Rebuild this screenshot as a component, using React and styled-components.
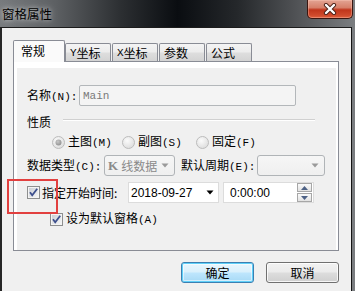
import React from "react";
import styled, { createGlobalStyle } from "styled-components";

const GlobalStyle = createGlobalStyle`
  html, body { margin: 0; padding: 0; }
  body {
    width: 355px; height: 291px; overflow: hidden;
    background: #6a6d70;
    font-family: "Noto Sans CJK SC", "Noto Sans", sans-serif;
  }
`;

const Window = styled.div`
  position: relative;
  width: 355px;
  height: 291px;
  display: flex;
  flex-direction: column;
  background: linear-gradient(90deg, #787b7e 0%, #5c5f62 16%, #2c2f32 34%, #0a0d11 50%, #25282b 67%, #57595c 86%, #7b7e81 100%);
`;

const TitleBar = styled.div`
  height: 27px;
  flex: none;
  display: flex;
  align-items: flex-start;
`;

const Title = styled.span`
  margin: 6px 0 0 2px;
  font-size: 12.5px;
  line-height: 15px;
  color: #000;
  text-shadow: 0 0 4px rgba(255,255,255,0.55), 0 0 9px rgba(255,255,255,0.45);
`;

const CloseButton = styled.div`
  box-sizing: border-box;
  margin-left: auto;
  margin-right: 2px;
  width: 46px;
  height: 19px;
  border: 1px solid #3a1610;
  border-top: none;
  border-radius: 0 0 5px 5px;
  background: linear-gradient(#e3a493 0%, #d6806a 42%, #c0351b 55%, #cf4a2c 85%, #e0603e 100%);
  box-shadow: inset 0 0 0 1px rgba(255, 210, 195, 0.35);
  display: flex;
  align-items: center;
  justify-content: center;
`;

const Client = styled.div`
  flex: 1;
  display: flex;
  flex-direction: column;
  background: #f0f0f0;
  margin-right: 3px;
  border-left: 2px solid #262626;
  border-right: 1px solid #141414;
  border-top: 1px solid #1c1c1c;
  padding: 12px 0 0 11px;
`;

const TabStrip = styled.div`
  display: flex;
  align-items: flex-end;
  height: 21px;
  position: relative;
  z-index: 1;
`;

const Tab = styled.div`
  box-sizing: border-box;
  width: ${(p) => (p.$active ? 52 : 46)}px;
  height: ${(p) => (p.$active ? 22 : 18)}px;
  margin-bottom: ${(p) => (p.$active ? -1 : 0)}px;
  margin-right: ${(p) => (p.$active ? 0 : 1)}px;
  border: 1px solid #898c95;
  border-bottom: none;
  border-radius: 2px 2px 0 0;
  background: ${(p) =>
    p.$active
      ? "#fafafa"
      : "linear-gradient(#f4f4f4 0%, #ececec 48%, #dedede 52%, #d3d3d3 100%)"};
  display: flex;
  align-items: center;
  padding-left: ${(p) => (p.$active ? 7 : 4)}px;
  padding-bottom: ${(p) => (p.$active ? 1 : 0)}px;
  font-size: 12px;
  line-height: 14px;
  color: #000;
  white-space: nowrap;
`;

const Ascii = styled.span`
  font-family: "Liberation Mono", monospace;
  font-size: 11px;
  color: ${(p) => p.$color || "inherit"};
`;

const Panel = styled.div`
  box-sizing: border-box;
  width: 326px;
  height: 190px;
  border: 1px solid #898c95;
  background: #fff;
  padding: 6px 2px 0 3px;
  display: flex;
`;

const Form = styled.div`
  flex: 1;
  background: #f0f0f0;
  display: flex;
  flex-direction: column;
  padding: 17px 0 0 10px;
`;

const Row = styled.div`
  display: flex;
  align-items: center;
  flex: none;
  height: ${(p) => p.$h || 21}px;
  margin-top: ${(p) => p.$mt || 0}px;
  padding-left: ${(p) => p.$indent || 0}px;
`;

const Label = styled.span`
  flex: none;
  width: ${(p) => (p.$w ? `${p.$w}px` : "auto")};
  margin-left: ${(p) => p.$ml || 0}px;
  font-size: 12px;
  line-height: 14px;
  color: ${(p) => (p.$disabled ? "#6d6d6d" : "#000")};
  white-space: nowrap;
`;

const TextInput = styled.div`
  box-sizing: border-box;
  width: 217px;
  height: 21px;
  border: 1px solid #b3b7ba;
  border-radius: 2px;
  background: #f4f4f4;
  padding-left: 3px;
  display: flex;
  align-items: center;
  font-family: "Liberation Mono", monospace;
  font-size: 11px;
  color: #7a7a7a;
`;

const GroupRule = styled.div`
  flex: 1;
  align-self: flex-start;
  margin: 4px 21px 0 12px;
  border-top: 1px solid #d0d0d0;
  border-bottom: 1px solid #ffffff;
`;

const RadioItem = styled.div`
  width: ${(p) => p.$w}px;
  flex: none;
  display: flex;
  align-items: center;
  gap: 3px;
`;

const Combo = styled.div`
  box-sizing: border-box;
  width: ${(p) => p.$w}px;
  height: 21px;
  flex: none;
  border: 1px solid #b0b4b7;
  border-radius: 3px;
  background: linear-gradient(#f6f6f6, #efefef);
  display: flex;
  align-items: center;
  padding: 0 5px 0 3px;
  font-size: 12px;
  line-height: 14px;
  color: #8a8a8a;
`;

const KLetter = styled.span`
  font-family: "Liberation Serif", serif;
  font-weight: bold;
  font-size: 13px;
  margin-right: 3px;
`;

const Arrow = styled.svg`
  margin-left: auto;
  flex: none;
`;

const Field = styled.div`
  box-sizing: border-box;
  width: 91px;
  height: 21px;
  flex: none;
  margin-left: ${(p) => p.$ml || 0}px;
  border: 1px solid #dcdcdc;
  background: #fff;
  display: flex;
  align-items: center;
  padding-left: ${(p) => p.$pl || 2}px;
  padding-right: ${(p) => p.$pr || 4}px;
  font-family: "Liberation Sans", Arial, sans-serif;
  font-size: 12px;
  color: #000;
`;

const Spinner = styled.div`
  margin-left: auto;
  display: flex;
  flex-direction: column;
  gap: 1px;
`;

const SpinButton = styled.div`
  box-sizing: border-box;
  width: 15px;
  height: 9px;
  border: 1px solid #a7a7a7;
  background: linear-gradient(#fafafa, #e2e2e2);
  display: flex;
  align-items: center;
  justify-content: center;
`;

const ButtonRow = styled.div`
  width: 326px;
  margin-top: 11px;
  display: flex;
  justify-content: flex-end;
  gap: 12px;
`;

const Button = styled.div`
  box-sizing: border-box;
  width: 73px;
  height: 21px;
  border-radius: 3px;
  border: 1px solid ${(p) => (p.$default ? "#3c7fb1" : "#707070")};
  background: ${(p) =>
    p.$default
      ? "linear-gradient(#eaf6fd 0%, #d9f0fc 48%, #bee6fd 52%, #a7d9f5 100%)"
      : "linear-gradient(#f2f2f2 0%, #ebebeb 48%, #dddddd 52%, #cfcfcf 100%)"};
  box-shadow: ${(p) =>
    p.$default
      ? "inset 0 0 0 1px #5fd0f9, inset 0 0 0 2px rgba(255,255,255,0.5)"
      : "inset 0 0 0 1px rgba(255,255,255,0.8)"};
  display: flex;
  align-items: center;
  justify-content: center;
  font-size: 12px;
  line-height: 14px;
  color: #000;
`;

const Annotation = styled.div`
  position: absolute;
  left: 7px;
  top: 179px;
  width: 51px;
  height: 35px;
  box-sizing: border-box;
  border: 2px solid #e2403f;
  pointer-events: none;
`;

function CheckBox() {
  return (
    <svg width="13" height="13" viewBox="0 0 13 13" style={{ flex: "none" }}>
      <defs>
        <linearGradient id="cbg" x1="0" y1="0" x2="1" y2="1">
          <stop offset="0" stopColor="#cbcfd5" />
          <stop offset="1" stopColor="#f6f6f6" />
        </linearGradient>
      </defs>
      <rect x="0.5" y="0.5" width="12" height="12" fill="#f4f4f4" stroke="#8e8f8f" />
      <rect x="2" y="2" width="9" height="9" fill="url(#cbg)" />
      <path d="M3 6.3 L5.2 9.2 L10.2 2.8" fill="none" stroke="#3d4f8d" strokeWidth="1.8" />
    </svg>
  );
}

function Radio({ checked }) {
  return (
    <svg width="13" height="13" viewBox="0 0 13 13" style={{ flex: "none" }}>
      <defs>
        <radialGradient id="rbg" cx="0.4" cy="0.35" r="0.7">
          <stop offset="0" stopColor="#fbfbfb" />
          <stop offset="1" stopColor="#dcdcdc" />
        </radialGradient>
        <radialGradient id="rdot" cx="0.4" cy="0.35" r="0.7">
          <stop offset="0" stopColor="#c8c8c8" />
          <stop offset="1" stopColor="#8e8e8e" />
        </radialGradient>
      </defs>
      <circle cx="6.5" cy="6.5" r="6" fill="url(#rbg)" stroke="#bcbcbc" />
      {checked && <circle cx="6.5" cy="6.5" r="3" fill="url(#rdot)" />}
    </svg>
  );
}

function DownArrow({ color }) {
  return (
    <Arrow width="8" height="5" viewBox="0 0 8 5">
      <path d="M0.5 0.5 H7.5 L4 4.5 Z" fill={color} />
    </Arrow>
  );
}

export default function App() {
  return (
    <>
      <GlobalStyle />
      <Window>
        <TitleBar>
          <Title>窗格属性</Title>
          <CloseButton>
            <svg width="14" height="12" viewBox="0 0 14 12">
              <path d="M3 2 L11 10 M11 2 L3 10" stroke="#4a2018" strokeWidth="4.2" strokeLinecap="round" />
              <path d="M3 2 L11 10 M11 2 L3 10" stroke="#ffffff" strokeWidth="2.4" strokeLinecap="round" />
            </svg>
          </CloseButton>
        </TitleBar>
        <Client>
          <TabStrip>
            <Tab $active>常规</Tab>
            <Tab><Ascii>Y</Ascii>坐标</Tab>
            <Tab><Ascii>X</Ascii>坐标</Tab>
            <Tab>参数</Tab>
            <Tab>公式</Tab>
          </TabStrip>
          <Panel>
            <Form>
              <Row>
                <Label $w={52}>名称<Ascii>(N):</Ascii></Label>
                <TextInput>Main</TextInput>
              </Row>
              <Row $h={14} $mt={9}>
                <Label>性质</Label>
                <GroupRule />
              </Row>
              <Row $h={14} $mt={6} $indent={25}>
                <RadioItem $w={70}>
                  <Radio checked />
                  <Label>主图<Ascii>(M)</Ascii></Label>
                </RadioItem>
                <RadioItem $w={74}>
                  <Radio />
                  <Label>副图<Ascii>(S)</Ascii></Label>
                </RadioItem>
                <RadioItem $w={70}>
                  <Radio />
                  <Label>固定<Ascii>(F)</Ascii></Label>
                </RadioItem>
              </Row>
              <Row $mt={6}>
                <Label $w={77}>数据类型<Ascii>(C):</Ascii></Label>
                <Combo $w={71}>
                  <KLetter>K</KLetter>线数据
                  <DownArrow color="#9a9a9a" />
                </Combo>
                <Label $w={76} $ml={6}>默认周期<Ascii>(E):</Ascii></Label>
                <Combo $w={68}>
                  <DownArrow color="#9a9a9a" />
                </Combo>
              </Row>
              <Row $mt={6}>
                <CheckBox />
                <Label $w={86} $ml={2}>指定开始时间:</Label>
                <Field>
                  2018-09-27
                  <DownArrow color="#000" />
                </Field>
                <Field $ml={4} $pl={6} $pr={1}>
                  0:00:00
                  <Spinner>
                    <SpinButton>
                      <svg width="7" height="4" viewBox="0 0 7 4"><path d="M0 4 H7 L3.5 0 Z" fill="#4d6185" /></svg>
                    </SpinButton>
                    <SpinButton>
                      <svg width="7" height="4" viewBox="0 0 7 4"><path d="M0 0 H7 L3.5 4 Z" fill="#4d6185" /></svg>
                    </SpinButton>
                  </Spinner>
                </Field>
              </Row>
              <Row $h={14} $mt={9} $indent={23}>
                <CheckBox />
                <Label $ml={3}>设为默认窗格<Ascii>(A)</Ascii></Label>
              </Row>
            </Form>
          </Panel>
          <ButtonRow>
            <Button $default>确定</Button>
            <Button>取消</Button>
          </ButtonRow>
        </Client>
        <Annotation />
      </Window>
    </>
  );
}
